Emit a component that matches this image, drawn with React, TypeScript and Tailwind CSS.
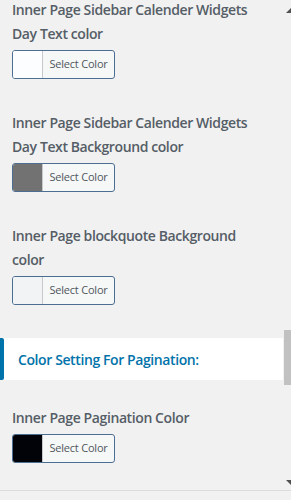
import React from "react";

function ColorButton({ color }: { color: string }) {
  return (
    <div className="mt-1 flex h-[29px] w-[103px] overflow-hidden rounded-[3px] border border-[#4c6e92] bg-[#f6f7f7]">
      <div className="h-full w-[30px] border-r border-[#c6c9cc]" style={{ backgroundColor: color }} />
      <div className="flex flex-1 items-center justify-center text-[11px] tracking-[-0.2px] text-[#50575e]">Select Color</div>
    </div>
  );
}

function Label({ lines }: { lines: string[] }) {
  return (
    <div className="text-[14px] font-semibold leading-[24px] tracking-[-0.4px] text-[#555d66]">
      {lines.map((l) => (
        <div key={l}>{l}</div>
      ))}
    </div>
  );
}

export default function App() {
  return (
    <div
      className="relative h-[500px] w-[291px] overflow-hidden bg-[#f1f1f1]"
      style={{ fontFamily: '"Open Sans", "Noto Sans", sans-serif' }}
    >
      <div className="flex w-[283px] flex-col">
        <div className="mt-[-2px] px-3">
          <Label lines={["Inner Page Sidebar Calender Widgets", "Day Text color"]} />
          <ColorButton color="#fbfdfe" />
        </div>
        <div className="mt-[32px] px-3">
          <Label lines={["Inner Page Sidebar Calender Widgets", "Day Text Background color"]} />
          <ColorButton color="#727272" />
        </div>
        <div className="mt-[32px] px-3">
          <Label lines={["Inner Page blockquote Background", "color"]} />
          <ColorButton color="#f1f3f5" />
        </div>
        <div className="relative mt-[33px] flex h-[42px] items-center bg-white pl-[18px]">
          <div className="absolute left-0 top-0 h-full w-[4px] rounded-r-[2px] bg-[#0073aa]" />
          <span className="text-[14px] font-semibold tracking-[-0.4px] text-[#0073aa]">Color Setting For Pagination:</span>
        </div>
        <div className="mt-[26px] px-3">
          <Label lines={["Inner Page Pagination Color"]} />
          <ColorButton color="#020308" />
        </div>
      </div>
      {/* scrollbar */}
      <div className="absolute right-0 top-0 h-[490px] w-[8px]">
        <svg className="absolute right-0 top-[8px]" width="5" height="5" viewBox="0 0 5 5">
          <polygon points="0,5 5,5 5,0" fill="#505050" />
        </svg>
        <div className="absolute right-0 top-[330px] h-[55px] w-[7px] bg-[#c1c1c1]" />
        <svg className="absolute right-0 top-[480px]" width="5" height="5" viewBox="0 0 5 5">
          <polygon points="0,0 5,0 5,5" fill="#505050" />
        </svg>
      </div>
      <div className="absolute left-0 top-[490px] h-px w-full bg-[#dcdcde]" />
    </div>
  );
}
